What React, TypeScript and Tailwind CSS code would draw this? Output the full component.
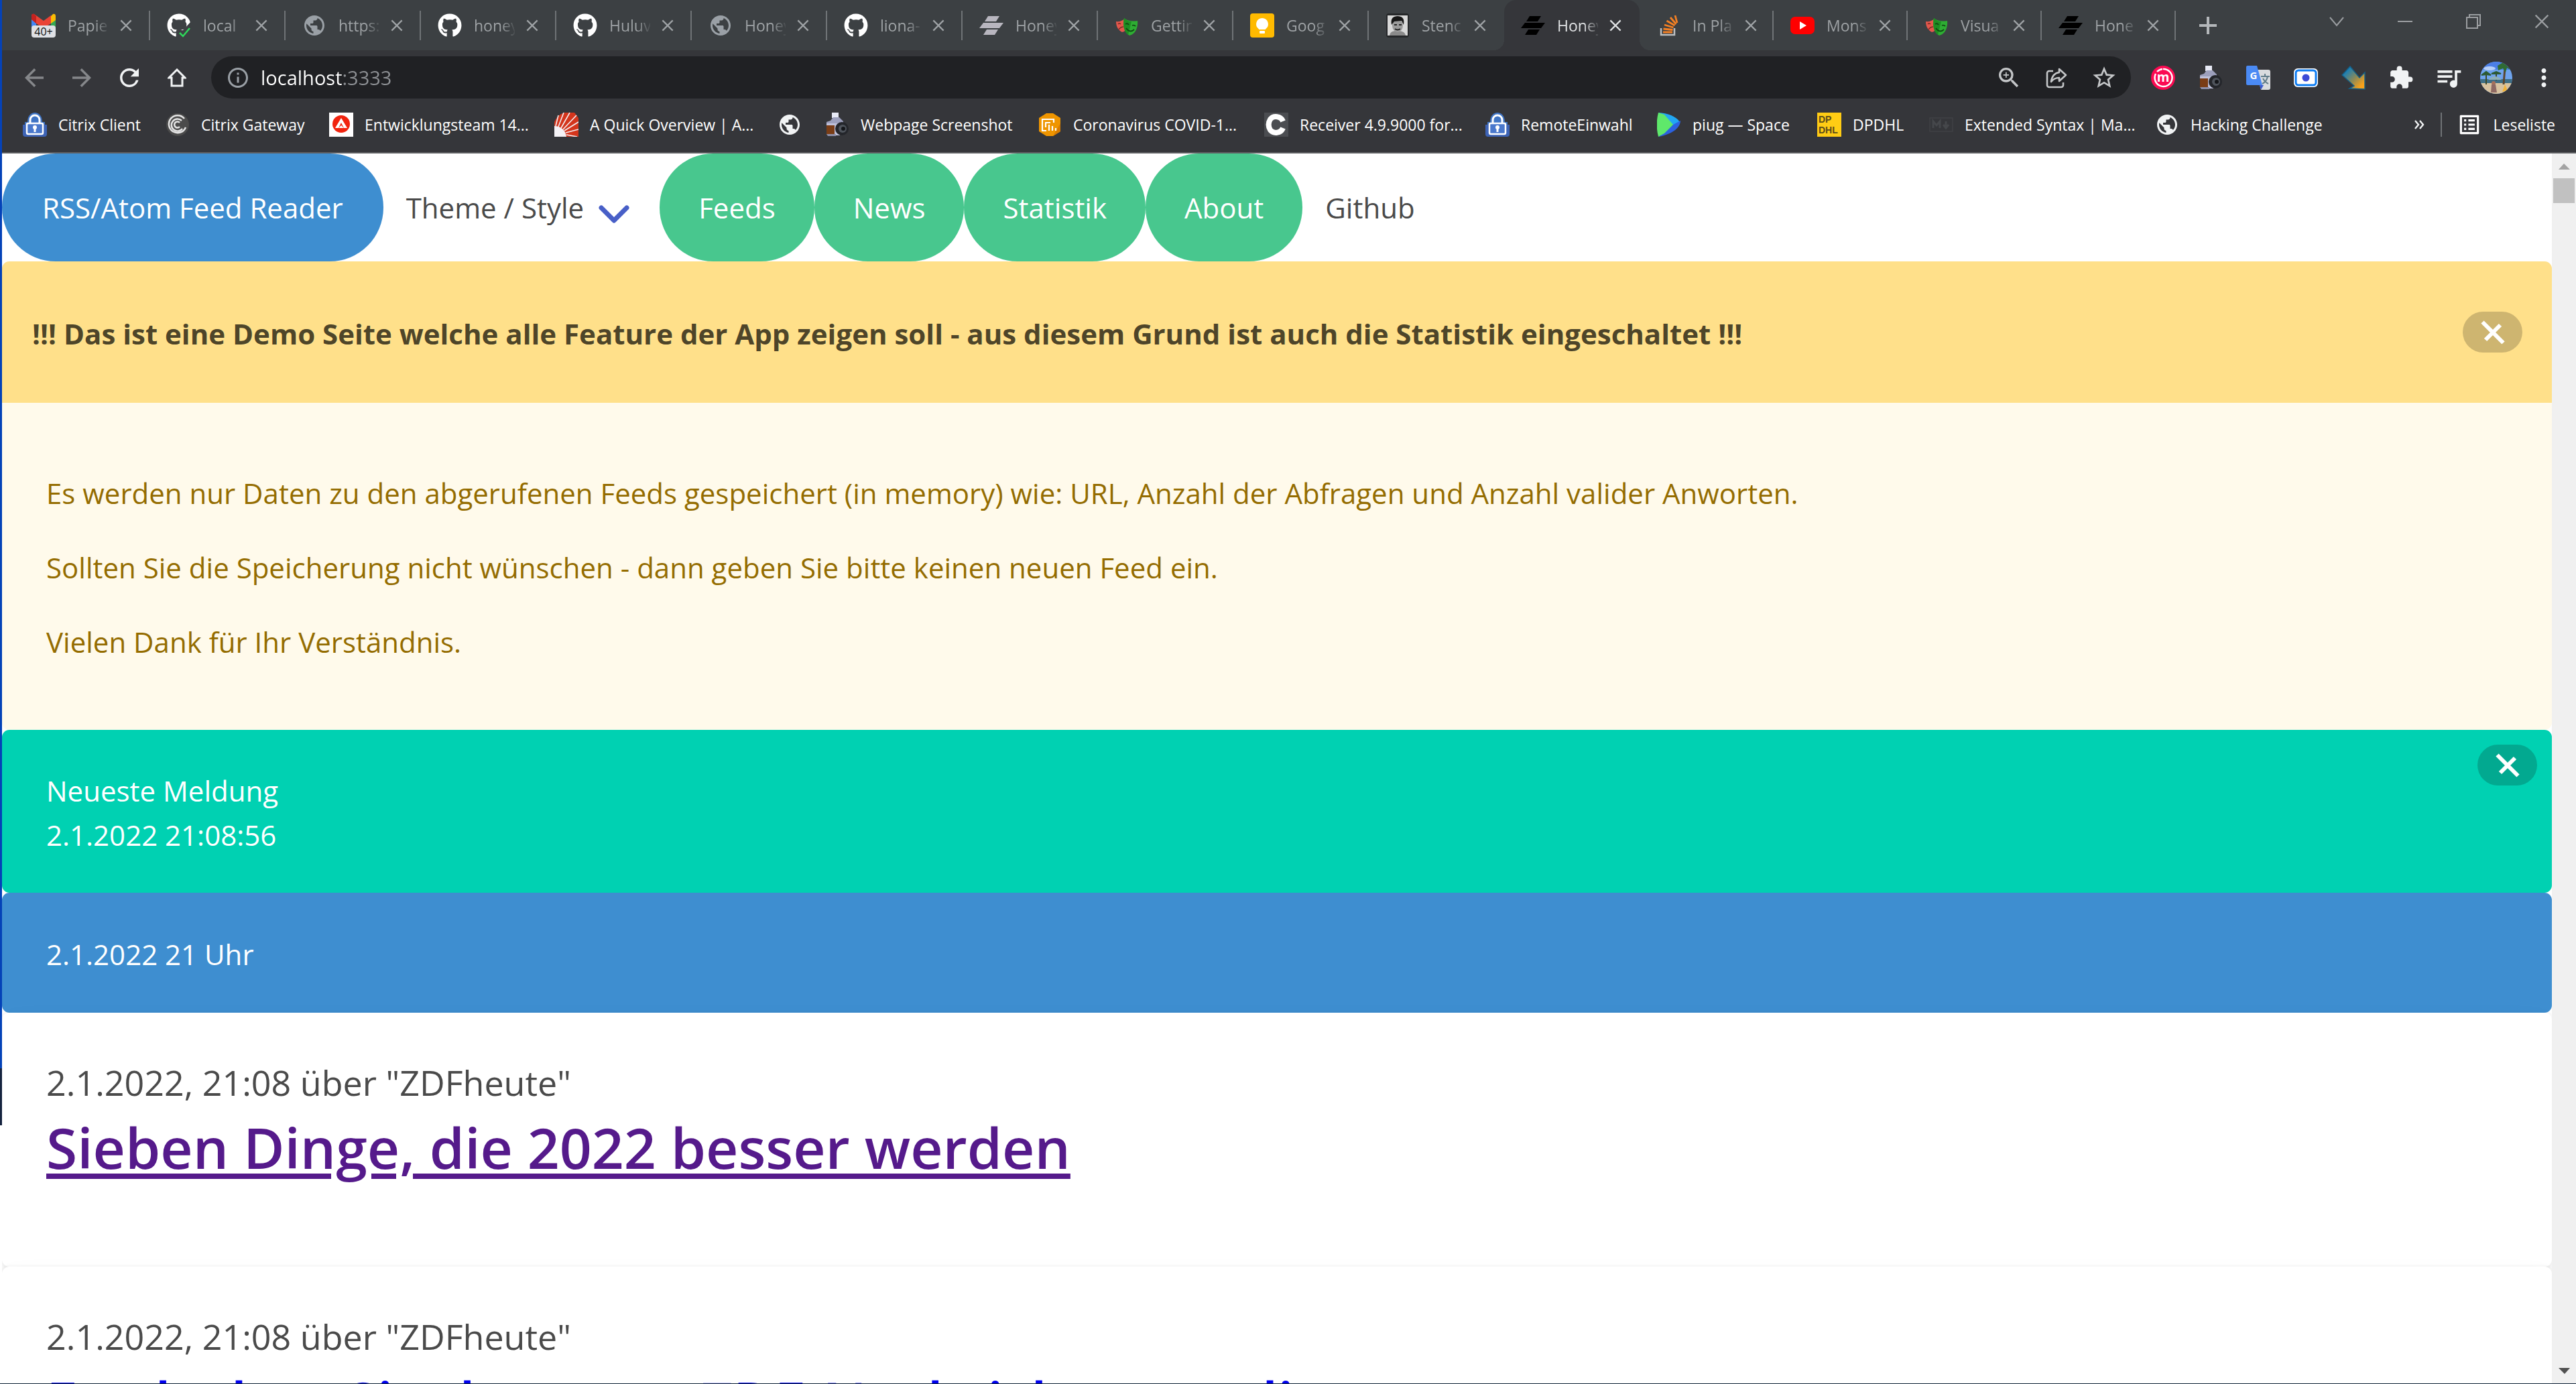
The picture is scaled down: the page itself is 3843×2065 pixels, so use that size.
import React from "react";
import {
  MdArrowBack,
  MdArrowForward,
  MdRefresh,
  MdOutlineHome,
  MdInfoOutline,
  MdZoomIn,
  MdStarBorder,
  MdExtension,
  MdQueueMusic,
  MdMoreVert,
  MdPublic,
  MdOutlineListAlt,
} from "react-icons/md";
import { FaGithub } from "react-icons/fa";

/* ---------- favicons ---------- */

function Gmail() {
  return (
    <svg viewBox="0 0 36 36" className="size-9">
      <path d="M0 5 7 10v18H2a2 2 0 0 1-2-2z" fill="#4285f4" />
      <path d="M36 5l-7 5v18h5a2 2 0 0 0 2-2z" fill="#34a853" />
      <path d="M29 4l3-3c2-1 4 0 4 3v6l-7 5z" fill="#fbbc04" />
      <path d="M0 4c0-3 2-4 4-3l14 10L29 3v12L18 22 7 15 0 9z" fill="#ea4335" />
      <path d="M0 4c0-3 2-4 4-3l3 3v11L0 9z" fill="#c5221f" />
      <rect x="0" y="18" width="36" height="18" rx="4" fill="#dfe1e5" />
      <text x="18" y="33" textAnchor="middle" fontSize="16" fontFamily="Open Sans, sans-serif" fill="#111">40+</text>
    </svg>
  );
}

function GithubCheck() {
  return (
    <span className="relative block size-9">
      <FaGithub className="size-9 text-white" />
      <svg viewBox="0 0 36 36" className="absolute inset-0 size-9">
        <path d="M16 36V26l8-1 12-13v24z" fill="#3c4043" />
        <path d="M19 29l5 5 10-12" fill="none" stroke="#2fd65a" strokeWidth="2.5" />
      </svg>
    </span>
  );
}

const Github = () => <FaGithub className="size-9 text-white" />;
const Globe = () => <MdPublic className="size-9 text-[#9aa0a6]" />;
const GlobeWhite = () => <MdPublic className="size-9 text-[#f1f3f4]" />;

function Stencil({ dark = false }: { dark?: boolean }) {
  return (
    <svg viewBox="0 0 36 36" className="size-9" fill={dark ? "#000" : "#b8b6bf"}>
      <path d="M13 4h17l-5 8H8z" />
      <path d="M6 14h30l-6 8H0z" />
      <path d="M11 24h17l-5 8H6z" />
    </svg>
  );
}

function Masks() {
  return (
    <svg viewBox="0 0 36 36" className="size-9">
      <path d="M2 12c5 1 9-1 13-4l2 16c-3 4-6 5-9 2C4 23 2 18 2 12z" fill="#e2574c" />
      <path d="M5 16q2-2 4 0M6 24q3-4 7-4" fill="none" stroke="#7d2b25" strokeWidth="1.6" />
      <path d="M14 7c6 5 13 5 20 4 1 8-2 20-12 22C14 29 12 16 14 7z" fill="#2ead33" />
      <path d="M14 7c6 5 8 5 11 5l-5 20C13 27 12 16 14 7z" fill="#1d8d22" />
      <path d="M16 16q3-2 5 1M26 18q3-1 5 1M17 22c3 5 8 6 12 2" fill="none" stroke="#0f4a12" strokeWidth="1.8" />
    </svg>
  );
}

function Keep() {
  return (
    <svg viewBox="0 0 36 36" className="size-9">
      <rect width="36" height="36" rx="4" fill="#ffba00" />
      <path d="M18 7a9 9 0 0 0-5 16.400V24h10v-.6A9 9 0 0 0 18 7z" fill="#fff" />
      <rect x="14" y="26" width="8" height="4" rx="1" fill="#fff" />
    </svg>
  );
}

function Portrait() {
  return (
    <svg viewBox="0 0 36 36" className="size-9">
      <rect x="1" y="0" width="34" height="36" rx="4" fill="#26282a" />
      <rect x="3" y="3" width="30" height="30" fill="#d8d8d8" />
      <path d="M6 33c1-6 5-7 12-7s11 2 12 7z" fill="#8a8a8a" />
      <ellipse cx="18" cy="18" rx="8" ry="10" fill="#9b9b9b" />
      <path d="M9 17C7 7 12 4 18 4s11 3 9 13l-3-6-11 1z" fill="#161616" />
      <path d="M13 17h4M20 17h4M14 23q4 3 8 0" stroke="#222" strokeWidth="1.800" fill="none" />
    </svg>
  );
}

function StackOverflow() {
  return (
    <svg viewBox="0 0 36 36" className="size-9" fill="none">
      <path d="M7 22v10h20V22" stroke="#bcbec0" strokeWidth="2.500" />
      <path d="M10 28h14M10.500 23l14 1.500M12 17l13.500 4M15.500 11l12 7M21 6l8.500 10M28 3l3 11" stroke="#f48024" strokeWidth="2.800" />
    </svg>
  );
}

function YouTube() {
  return (
    <svg viewBox="0 0 36 36" className="size-9">
      <rect y="5" width="36" height="26" rx="7" fill="#f00" />
      <path d="M14 12l10 6-10 6z" fill="#fff" />
    </svg>
  );
}

/* ---------- bookmark icons ---------- */

function Lock() {
  return (
    <svg viewBox="0 0 36 36" className="size-9">
      <path d="M3 14h4C7 5 12 0 18 0s11 5 11 14h4v17a5 5 0 0 1-5 5H8a5 5 0 0 1-5-5z" fill="#3f74c4" />
      <path d="M0 18h36v14a4 4 0 0 1-4 4H4a4 4 0 0 1-4-4z" fill="#3d63b5" />
      <path d="M11 16v-5a7 7 0 0 1 14 0v5" fill="none" stroke="#fff" strokeWidth="3" />
      <rect x="6" y="16" width="24" height="16" rx="2" fill="#4a78cc" stroke="#fff" strokeWidth="2.500" />
      <circle cx="18" cy="22" r="3" fill="#fff" />
      <path d="M16.500 23h3v6h-3z" fill="#fff" />
    </svg>
  );
}

function Spiral() {
  return (
    <svg viewBox="0 0 36 36" className="size-9" fill="none">
      <circle cx="18" cy="18" r="17" fill="#4b4b4b" />
      <path d="M28 9A13 13 0 1 0 30 22M24 12a9 9 0 1 0 1 12M21 15a4.500 4.500 0 1 0 0 6" stroke="#e5e5e5" strokeWidth="2.500" />
    </svg>
  );
}

function Agency() {
  return (
    <svg viewBox="0 0 36 36" className="size-9">
      <rect width="36" height="36" fill="#fff" />
      <circle cx="18" cy="17" r="13" fill="#f1230e" />
      <path d="M18 8l9 15h-5l-4-8-4 8H9z" fill="#fff" />
      <path d="M14 23l4-4 4 4z" fill="#fff" />
    </svg>
  );
}

function Rays() {
  return (
    <svg viewBox="0 0 36 36" className="size-9">
      <rect width="36" height="36" fill="#d3351c" />
      <path d="M0 0h15C8 2 3 7 0 14zM30 0h6v8z" fill="#35363a" />
      <path
        d="M2 20 6 4M6 21 14 0M10 23 23 0M13 25 33 4M15 27 36 14M17 30 36 25M18 33l16 3"
        stroke="#f4f2f6"
        strokeWidth="1.600"
      />
      <path d="M0 20c9 0 17 6 18 16H0z" fill="#f4f2f6" />
    </svg>
  );
}

function Camera() {
  return (
    <svg viewBox="0 0 36 36" className="size-9">
      <rect x="10" y="0" width="10" height="8" fill="#e8eaf6" />
      <path d="M8 12l4-5h9l6 6v6H2v-5z" fill="#9da0bd" />
      <rect x="2" y="19" width="12" height="14" fill="#7a3d16" />
      <path d="M2 16h28v3H2zM14 19h8v15h-8z" fill="#bfc1da" />
      <circle cx="25" cy="24" r="10" fill="#24262b" />
      <circle cx="26" cy="24" r="6" fill="#4f545c" />
      <circle cx="27" cy="24" r="3" fill="#14161a" />
      <path d="M2 32h14v3H4z" fill="#8d8fa8" />
    </svg>
  );
}

function Hexagon() {
  return (
    <svg viewBox="0 0 36 36" className="size-9">
      <path d="M13 1h10l11 7v20l-11 7H13L2 28V8z" fill="#ef9500" />
      <path d="M23 35l11-7V16z" fill="#d97c00" />
      <path d="M24 15v-5H7v17h6M19 15h-7v7M17 18v9M22 20v7M27 23v4" fill="none" stroke="#fff" strokeWidth="2.200" />
    </svg>
  );
}

function LetterC() {
  return (
    <svg viewBox="0 0 36 36" className="size-9">
      <rect width="36" height="36" fill="#4b4d51" />
      <path d="M28 13c-3-8-14-9-19-3-3 5-3 11 0 16 5 6 16 5 19-3" fill="none" stroke="#fff" strokeWidth="8" />
    </svg>
  );
}

function Space() {
  return (
    <svg viewBox="0 0 36 36" className="size-9">
      <path d="M2 0c14 1 26 5 32 14L24 19z" fill="#22a7f2" />
      <path d="M35 12c0 9-10 20-33 24l22-18z" fill="#2b62e0" />
      <path d="M2 0l9 3 13 15-13 13-9 5C-1 25-1 11 2 0z" fill="#5fe86b" />
    </svg>
  );
}

function Dhl() {
  return (
    <svg viewBox="0 0 36 36" className="size-9">
      <rect width="36" height="36" fill="#ffcc14" />
      <text x="2" y="15" fontSize="14" fontWeight="700" fontFamily="Liberation Sans, sans-serif" fill="#5a4b1a">DP</text>
      <text x="2" y="31" fontSize="14" fontWeight="700" fontFamily="Liberation Sans, sans-serif" fill="#5a4b1a">DHL</text>
    </svg>
  );
}

function Markdown() {
  return (
    <svg viewBox="0 0 36 36" className="size-9" fill="none">
      <rect x="1" y="8" width="34" height="20" stroke="#404246" strokeWidth="1.500" />
      <path d="M6 23V13l5 6 5-6v10M25 13v9M21 18l4 5 4-5" stroke="#45474b" strokeWidth="3" />
    </svg>
  );
}

/* ---------- extension icons ---------- */

function Momentum() {
  return (
    <svg viewBox="0 0 36 36" className="size-9">
      <circle cx="18" cy="18" r="18" fill="#fb0a52" />
      <path d="M18 5a13 13 0 1 1-11 7M9 9a13 13 0 0 1 8-4" fill="none" stroke="#fff" strokeWidth="2.500" />
      <text x="18" y="24" textAnchor="middle" fontSize="19" fontWeight="700" fontFamily="Open Sans, sans-serif" fill="#fff">m</text>
    </svg>
  );
}

function Translate() {
  return (
    <svg viewBox="0 0 36 36" className="size-9">
      <path d="M14 6h19a3 3 0 0 1 3 3v24a3 3 0 0 1-3 3H22z" fill="#d9dcdf" />
      <path d="M22 16h13M28 12v4M32 16c-1 5-4 9-8 11M25 19c2 4 4 6 8 8" fill="none" stroke="#607d8b" strokeWidth="2" />
      <path d="M20 29h6l-4 7z" fill="#3b5bd0" />
      <path d="M2 0h14l8 29H2a2 2 0 0 1-2-2V2a2 2 0 0 1 2-2z" fill="#4a8af4" />
      <text x="11" y="20" textAnchor="middle" fontSize="15" fontWeight="700" fontFamily="Open Sans, sans-serif" fill="#fff">G</text>
    </svg>
  );
}

function ScreenCam() {
  return (
    <svg viewBox="0 0 36 36" className="size-9">
      <rect x="0" y="4" width="36" height="28" rx="6" fill="#fff" />
      <rect x="3" y="7" width="30" height="22" rx="4" fill="#fff" stroke="#0d7cf2" strokeWidth="3" />
      <circle cx="18" cy="18" r="5.500" fill="#3c4bd6" />
    </svg>
  );
}

function Arrow() {
  return (
    <svg viewBox="0 0 36 36" className="size-9">
      <defs>
        <linearGradient id="arrowFill" x1="0" y1="0" x2="1" y2="1">
          <stop offset="0.200" stopColor="#1b7fb5" />
          <stop offset="0.550" stopColor="#8f8a55" />
          <stop offset="0.850" stopColor="#f7a11a" />
        </linearGradient>
      </defs>
      <path d="M13 1l14 17 8-8v25l-23-1 7-4L1 14z" fill="url(#arrowFill)" stroke="#145f87" strokeWidth="1.500" />
    </svg>
  );
}

function Avatar() {
  return (
    <svg viewBox="0 0 48 48" className="size-12">
      <defs>
        <clipPath id="avatarClip">
          <circle cx="24" cy="24" r="24" />
        </clipPath>
      </defs>
      <g clipPath="url(#avatarClip)">
        <rect width="48" height="48" fill="#6fa4ee" />
        <rect width="48" height="12" fill="#4c7fe6" />
        <ellipse cx="14" cy="10" rx="9" ry="3" fill="#b8d0f7" />
        <rect y="26" width="48" height="7" fill="#3f6f86" />
        <rect y="32" width="48" height="16" fill="#d8c3a0" />
        <path d="M9 18v16M24 16v12" stroke="#3b4a2b" strokeWidth="2" />
        <path d="M2 20l7-5 7 5-7-1zM17 18l7-3 7 3-7 0z" fill="#2d5a34" stroke="#2d5a34" strokeWidth="2" />
        <path d="M37 8l-2 26" stroke="#5b4630" strokeWidth="3" />
        <path d="M26 6l10-6 12 6v8l-8-5-2 7-4-6-7 3z" fill="#2f6b33" />
        <path d="M12 27q10-10 20 0z" fill="#8fb0b8" />
        <circle cx="20" cy="32" r="3" fill="#a5705a" />
        <path d="M17 34h6l2 12h-9z" fill="#8f6a63" />
        <path d="M33 45l4-11 4 9z" fill="#f2b43c" />
      </g>
    </svg>
  );
}

/* ---------- small controls ---------- */

function Cross({ className }: { className: string }) {
  return (
    <svg viewBox="0 0 20 20" className={className} fill="none" stroke="currentColor">
      <path d="M1.500 1.500l17 17M18.500 1.500l-17 17" />
    </svg>
  );
}

function DismissButton({ label }: { label: string }) {
  return (
    <button
      type="button"
      aria-label={label}
      className="flex h-[61px] w-[89px] shrink-0 items-center justify-center rounded-full bg-[#0a0a0a]/20 text-white"
    >
      <svg viewBox="0 0 36 36" className="size-9" fill="none" stroke="currentColor" strokeWidth="6">
        <path d="M2.500 2.500l31 31M29 7L7 29" />
      </svg>
    </button>
  );
}

/* ---------- browser chrome ---------- */

type Tab = { title: string; icon: React.ReactNode; active?: boolean };

const tabs: Tab[] = [
  { title: "Papie", icon: <Gmail /> },
  { title: "local", icon: <GithubCheck /> },
  { title: "https:", icon: <Globe /> },
  { title: "honey", icon: <Github /> },
  { title: "Huluv", icon: <Github /> },
  { title: "Honey", icon: <Globe /> },
  { title: "liona-", icon: <Github /> },
  { title: "Honey", icon: <Stencil /> },
  { title: "Gettin", icon: <Masks /> },
  { title: "Goog", icon: <Keep /> },
  { title: "Stenc", icon: <Portrait /> },
  { title: "Honey", icon: <Stencil dark />, active: true },
  { title: "In Pla", icon: <StackOverflow /> },
  { title: "Mons", icon: <YouTube /> },
  { title: "Visua", icon: <Masks /> },
  { title: "Hone", icon: <Stencil dark /> },
];

function TabItem({ tab, index }: { tab: Tab; index: number }) {
  const divider = !tab.active && index !== 10;
  return (
    <div
      className={
        "relative flex h-full items-center pl-[25px] " +
        (index > 11 ? "w-[200px] " : "w-[202px] ") +
        (tab.active ? "rounded-t-[18px] bg-[#35363a] text-[#dfe1e3]" : "text-[#9ea2a5]")
      }
    >
      {tab.active && (
        <>
          <span className="absolute bottom-0 -left-[16px] size-4 bg-[radial-gradient(circle_at_0_0,transparent_16px,#35363a_16px)]" />
          <span className="absolute -right-[16px] bottom-0 size-4 bg-[radial-gradient(circle_at_100%_0,transparent_16px,#35363a_16px)]" />
        </>
      )}
      {tab.icon}
      <button
        type="button"
        role="tab"
        aria-selected={!!tab.active}
        className="ml-[18px] w-[61px] text-left text-[23px] leading-[36px] whitespace-nowrap [mask-image:linear-gradient(90deg,#000_40px,transparent_64px)]"
      >
        {tab.title}
      </button>
      <button type="button" aria-label="Tab schließen" className="ml-[17px]">
        <Cross className="size-[18px] stroke-[2.500px]" />
      </button>
      {divider && <span className="ml-auto h-[44px] w-[2px] bg-[#6f7376]" />}
    </div>
  );
}

function TabStrip() {
  return (
    <div className="flex h-[75px] items-center bg-[#3c4043] pl-[19px] text-[#9ea2a5]">
      <div role="tablist" className="flex h-full">
        {tabs.map((t, i) => (
          <TabItem key={i} tab={t} index={i} />
        ))}
      </div>
      <button type="button" aria-label="Neuer Tab" className="ml-[35px]">
        <svg viewBox="0 0 26 26" className="size-[26px]" stroke="#b4b7ba" strokeWidth="4">
          <path d="M13 0v26M0 13h26" />
        </svg>
      </button>
      <div className="mr-[40px] mb-[11px] ml-auto flex items-center gap-[80px] text-[#9b9ea1]">
        <button type="button" aria-label="Tabs suchen">
          <svg viewBox="0 0 22 22" className="size-[22px]" fill="none" stroke="currentColor" strokeWidth="2">
            <path d="M1 5l10 12L21 5" />
          </svg>
        </button>
        <button type="button" aria-label="Minimieren">
          <svg viewBox="0 0 22 22" className="size-[22px]" fill="none" stroke="currentColor" strokeWidth="2">
            <path d="M0 11h22" />
          </svg>
        </button>
        <button type="button" aria-label="Verkleinern">
          <svg viewBox="0 0 22 22" className="size-[22px]" fill="none" stroke="currentColor" strokeWidth="2">
            <path d="M1 5h16v16H1zM5 5V1h16v16h-4" />
          </svg>
        </button>
        <button type="button" aria-label="Schließen">
          <Cross className="size-[22px] stroke-2" />
        </button>
      </div>
    </div>
  );
}

const iconButton = "flex w-[71px] shrink-0 items-center justify-center";

function AddressRow() {
  return (
    <div className="flex h-[81px] items-center pl-[12px] text-[#f1f3f4]">
      <button type="button" aria-label="Zurück" className={iconButton}>
        <MdArrowBack className="size-[42px] text-[#85878a]" />
      </button>
      <button type="button" aria-label="Vorwärts" className={iconButton}>
        <MdArrowForward className="size-[42px] text-[#85878a]" />
      </button>
      <button type="button" aria-label="Neu laden" className={iconButton}>
        <MdRefresh className="size-[42px]" />
      </button>
      <button type="button" aria-label="Startseite" className={iconButton}>
        <svg viewBox="0 0 28 28" className="size-7" fill="none" stroke="currentColor" strokeWidth="3">
          <path d="M2 14L14 2l12 12h-4v12H6V14z" />
        </svg>
      </button>
      <div className="ml-4 flex h-[63px] grow items-center rounded-full bg-[#202124] pl-[22px]">
        <MdInfoOutline className="size-[36px] text-[#9aa0a6]" />
        <input
          aria-label="Adresse"
          defaultValue="localhost:3333"
          className="ml-[16px] grow bg-[linear-gradient(90deg,#fff_123px,#8f9296_123px)] bg-clip-text text-[29px] text-transparent caret-white outline-none"
        />
        <button type="button" aria-label="Zoom" className={iconButton}>
          <MdZoomIn className="size-[40px] text-[#c4c6c8]" />
        </button>
        <button type="button" aria-label="Teilen" className={iconButton}>
          <svg viewBox="0 0 32 32" className="size-8" fill="none" stroke="#c4c6c8" strokeWidth="2.600">
            <path d="M11 6H5a3 3 0 0 0-3 3v18a3 3 0 0 0 3 3h18a3 3 0 0 0 3-3v-4" />
            <path d="M20 3l10 9-10 9v-5c-6 0-9 2-12 6 1-8 5-13 12-14z" strokeLinejoin="round" />
          </svg>
        </button>
        <button type="button" aria-label="Lesezeichen" className={iconButton}>
          <MdStarBorder className="size-[40px] text-[#c4c6c8]" />
        </button>
        <span className="w-[5px]" />
      </div>
      <div className="mr-[13px] ml-[12px] flex items-center">
        <button type="button" aria-label="Momentum" className={iconButton}><Momentum /></button>
        <button type="button" aria-label="Webpage Screenshot" className={iconButton}><Camera /></button>
        <button type="button" aria-label="Übersetzer" className={iconButton}><Translate /></button>
        <button type="button" aria-label="Aufnahme" className={iconButton}><ScreenCam /></button>
        <button type="button" aria-label="Pfeil" className={iconButton}><Arrow /></button>
        <button type="button" aria-label="Erweiterungen" className={iconButton}><MdExtension className="size-[38px]" /></button>
        <button type="button" aria-label="Medien" className={iconButton}><MdQueueMusic className="size-[44px]" /></button>
        <button type="button" aria-label="Profil" className={iconButton}><Avatar /></button>
        <button type="button" aria-label="Menü" className={iconButton}><MdMoreVert className="size-[42px]" /></button>
      </div>
    </div>
  );
}

const bookmarks: { label: string; icon: React.ReactNode; width: string }[] = [
  { label: "Citrix Client", icon: <Lock />, width: "w-[213px]" },
  { label: "Citrix Gateway", icon: <Spiral />, width: "w-[244px]" },
  { label: "Entwicklungsteam 14...", icon: <Agency />, width: "w-[336px]" },
  { label: "A Quick Overview | A...", icon: <Rays />, width: "w-[333px]" },
  { label: "", icon: <GlobeWhite />, width: "w-[71px]" },
  { label: "Webpage Screenshot", icon: <Camera />, width: "w-[317px]" },
  { label: "Coronavirus COVID-1...", icon: <Hexagon />, width: "w-[338px]" },
  { label: "Receiver 4.9.9000 for...", icon: <LetterC />, width: "w-[330px]" },
  { label: "RemoteEinwahl", icon: <Lock />, width: "w-[256px]" },
  { label: "piug — Space", icon: <Space />, width: "w-[239px]" },
  { label: "DPDHL", icon: <Dhl />, width: "w-[167px]" },
  { label: "Extended Syntax | Ma...", icon: <Markdown />, width: "w-[337px]" },
  { label: "Hacking Challenge", icon: <GlobeWhite />, width: "w-[300px]" },
];

function BookmarkBar() {
  return (
    <div className="flex h-[71px] items-center pb-[11px] pl-[31px] text-[23px] leading-[36px] whitespace-nowrap text-white">
      {bookmarks.map((b, i) => (
        <a key={i} href="#" aria-label={b.label || "Lesezeichen"} className={"flex shrink-0 items-center gap-[17px] " + b.width}>
          <span className="shrink-0">{b.icon}</span>
          {b.label && <span>{b.label}</span>}
        </a>
      ))}
      <div className="mr-[31px] ml-auto flex items-center">
        <button type="button" aria-label="Weitere Lesezeichen">
          <svg viewBox="0 0 16 16" className="size-4" fill="none" stroke="#f1f3f4" strokeWidth="2.400">
            <path d="M1 2l5 6-5 6M8 2l5 6-5 6" />
          </svg>
        </button>
        <span className="ml-[23px] h-9 w-[2px] bg-[#6f7376]" />
        <button type="button" className="ml-[22px] flex items-center gap-[17px]">
          <MdOutlineListAlt className="size-[38px]" />
          Leseliste
        </button>
      </div>
    </div>
  );
}

/* ---------- page ---------- */

function Nav() {
  return (
    <nav className="flex h-[161px] items-stretch text-[42px] leading-[66px] whitespace-nowrap text-[#4a4a4a]">
      <a href="#" className="flex items-center rounded-[80px] bg-[#3e8ed0] px-[60px] text-white">
        RSS/Atom Feed Reader
      </a>
      <button type="button" aria-haspopup="menu" className="flex items-center gap-[22px] pr-[45px] pl-[34px]">
        Theme / Style
        <svg viewBox="0 0 46 28" className="mt-5 h-7 w-[46px]" fill="none" stroke="#485fc7" strokeWidth="7" strokeLinecap="round" strokeLinejoin="round">
          <path d="M4 4l19 19L42 4" />
        </svg>
      </button>
      {["Feeds", "News", "Statistik", "About"].map((label) => (
        <a key={label} href="#" className="flex items-center rounded-[80px] bg-[#48c78e] px-[58px] text-white">
          {label}
        </a>
      ))}
      <a href="#" className="flex items-center px-[34px]">
        Github
      </a>
    </nav>
  );
}

function Article({ meta, title, color }: { meta: string; title: string; color: string }) {
  return (
    <article className="relative h-[379px] rounded-[11px] bg-white px-[66px] pt-[62px] text-[#4a4a4a] shadow-[0_22px_45px_-6px_rgba(10,10,10,0.1),0_0_0_3px_rgba(10,10,10,0.02)]">
      <p className="text-[52px] leading-[84px]">{meta}</p>
      <h2 className="text-[84px] leading-[110px] font-semibold whitespace-nowrap">
        <a href="#" className={"underline decoration-[8px] underline-offset-[7px] " + color}>
          {title}
        </a>
      </h2>
    </article>
  );
}

function Page() {
  return (
    <main className="min-w-0 grow overflow-hidden bg-white text-[42px] leading-[66px]">
      <Nav />
      <section className="overflow-hidden rounded-[11px] bg-[#fffaeb] text-[#946c00]">
        <header className="flex h-[211px] items-center justify-between bg-[#ffe08a] pr-[44px] pl-[45px] font-bold text-[#4e4529]">
          <p className="pt-1">!!! Das ist eine Demo Seite welche alle Feature der App zeigen soll - aus diesem Grund ist auch die Statistik eingeschaltet !!!</p>
          <DismissButton label="Hinweis schließen" />
        </header>
        <div className="flex flex-col gap-[45px] px-[66px] pt-[102px] pb-[98px]">
          <p>Es werden nur Daten zu den abgerufenen Feeds gespeichert (in memory) wie: URL, Anzahl der Abfragen und Anzahl valider Anworten.</p>
          <p>Sollten Sie die Speicherung nicht wünschen - dann geben Sie bitte keinen neuen Feed ein.</p>
          <p>Vielen Dank für Ihr Verständnis.</p>
        </div>
      </section>
      <section className="flex items-start justify-between rounded-[11px] bg-[#00d1b2] pr-[22px] pl-[66px] text-white">
        <p className="pt-[58px] pb-[53px]">
          Neueste Meldung
          <br />
          2.1.2022 21:08:56
        </p>
        <div className="pt-[22px]">
          <DismissButton label="Meldung schließen" />
        </div>
      </section>
      <section className="rounded-[11px] bg-[#3e8ed0] px-[66px] pt-[59px] pb-[54px] text-white">2.1.2022 21 Uhr</section>
      <Article meta={'2.1.2022, 21:08 über "ZDFheute"'} title="Sieben Dinge, die 2022 besser werden" color="text-[#551a8b]" />
      <Article meta={'2.1.2022, 21:08 über "ZDFheute"'} title="Entdecken Sie das neue ZDF-Nachrichtenstudio" color="text-[#0000ee]" />
    </main>
  );
}

function Scrollbar() {
  return (
    <div className="flex w-9 shrink-0 flex-col items-center bg-[#f0f0f0]">
      <svg viewBox="0 0 36 37" className="h-[37px] w-9">
        <path d="M10 24l8-9 9 9z" fill="#a3a3a3" />
      </svg>
      <div className="h-[37px] w-8 bg-[#c1c1c1]" />
      <svg viewBox="0 0 36 37" className="mt-auto h-[37px] w-9">
        <path d="M10 14h17l-8 9z" fill="#505050" />
      </svg>
    </div>
  );
}

export default function App() {
  return (
    <div className="flex h-screen overflow-hidden border-b border-[#12263a] bg-white font-['Open_Sans','Noto_Sans',sans-serif]">
      <div className="flex w-[3px] shrink-0 flex-col">
        <span className="grow-[1595] bg-[#0442b8]" />
        <span className="grow-[85] bg-[#15233f]" />
        <span className="grow-[385]" />
      </div>
      <div className="flex min-w-0 grow flex-col">
        <header className="shrink-0 border-b-2 border-[#5f6063] bg-[#35363a]">
          <TabStrip />
          <AddressRow />
          <BookmarkBar />
        </header>
        <div className="flex min-h-0 grow">
          <Page />
          <Scrollbar />
        </div>
      </div>
    </div>
  );
}
